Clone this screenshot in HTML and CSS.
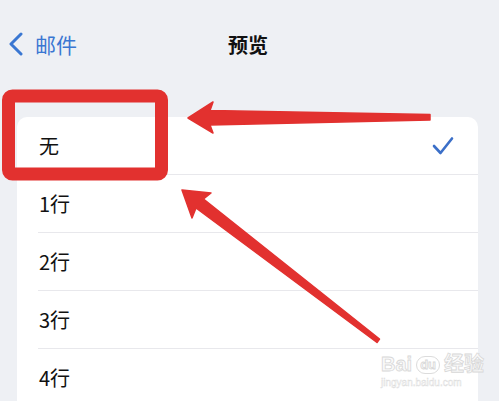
FILE: index.html
```html
<!DOCTYPE html>
<html lang="zh-CN">

<head>
    <meta charset="UTF-8">
    <meta name="viewport" content="width=device-width, initial-scale=1.0">
    <title>预览</title>
    <link rel="stylesheet" href="styles.css">
</head>

<body>
    <header class="navbar">
        <a class="back" href="#">
            <svg class="chevron" width="16" height="24" viewBox="0 0 16 24">
                <path d="M13 2 L3 12 L13 22" fill="none" stroke="currentColor" stroke-width="3" stroke-linecap="round" stroke-linejoin="round"/>
            </svg>
            <span>邮件</span>
        </a>
        <h1 class="title">预览</h1>
        <div></div>
    </header>

    <!-- 预览行数 -->
    <ul class="list">
        <li class="row">
            <div class="row-inner">
                <span>无</span>
                <svg class="check" width="22" height="20" viewBox="0 0 22 20">
                    <path d="M2 10 L8.5 17 L20 2.5" fill="none" stroke="currentColor" stroke-width="2.6" stroke-linecap="round" stroke-linejoin="round"/>
                </svg>
            </div>
        </li>
        <li class="row"><div class="row-inner"><span>1行</span></div></li>
        <li class="row"><div class="row-inner"><span>2行</span></div></li>
        <li class="row"><div class="row-inner"><span>3行</span></div></li>
        <li class="row"><div class="row-inner"><span>4行</span></div></li>
    </ul>

    <!-- 水印 -->
    <div class="watermark">
        <div class="wm-logo">Bai<span class="wm-du">du</span>经验</div>
        <div class="wm-url">jingyan.baidu.com</div>
    </div>

    <!-- 标注 -->
    <svg class="marks" width="499" height="401" viewBox="0 0 499 401">
        <rect x="8.5" y="96" width="153" height="78" rx="4" fill="none" stroke="#e2312f" stroke-width="13"/>
        <polygon points="188,118 213,102 210,110.5 430,114.5 430,120 210,125 213,133" fill="#e2312f" stroke="#e2312f" stroke-width="1.5" stroke-linejoin="round"/>
        <polygon points="182,190 211,193 203.5,199 379.5,339 377,342.5 196,208 192,218" fill="#e2312f" stroke="#e2312f" stroke-width="1.5" stroke-linejoin="round"/>
    </svg>
</body>

</html>
```

FILE: styles.css
```css
body {
    margin: 0;
    background-color: #eef0f4;
    font-family: "Noto Sans CJK SC", "Noto Sans", sans-serif;
    color: #111;
    height: 401px;
    overflow: hidden;
}

.navbar {
    display: grid;
    grid-template-columns: 1fr auto 1fr;
    align-items: center;
    height: 88px;
}

.back {
    display: flex;
    align-items: center;
    gap: 11px;
    padding-left: 8px;
    color: #3a77d2;
    text-decoration: none;
    font-size: 21px;
}

.chevron {
    display: block;
}

.title {
    margin: 0 3px 0 0;
    font-size: 20px;
    font-weight: 700;
    color: #111;
}

.list {
    list-style: none;
    margin: 29px 0 0 17px;
    padding: 0;
    width: 461px;
    background-color: #fff;
    border-radius: 10px 10px 0 0;
}

.row {
    height: 58px;
}

.row-inner {
    display: flex;
    align-items: center;
    justify-content: space-between;
    height: 57px;
    margin-left: 21px;
    padding: 0 24px 0 1px;
    border-bottom: 1px solid #e8e8ec;
    font-size: 20px;
}

.check {
    display: block;
    color: #3b6fc8;
}

.watermark {
    position: absolute;
    left: 381px;
    top: 352px;
    color: #fafafa;
    -webkit-text-stroke: 0.8px #d8d8d8;
    font-family: "Liberation Sans", "Noto Sans CJK SC", sans-serif;
}

.wm-logo {
    font-size: 20px;
    font-weight: 700;
    line-height: 24px;
}

.wm-du {
    display: inline-block;
    margin: 0 4px;
    padding: 0 3px;
    border: 1.5px solid #dcdcdc;
    border-radius: 9px;
    font-size: 13px;
    line-height: 16px;
    vertical-align: 2px;
}

.wm-url {
    font-size: 10px;
    line-height: 13px;
    -webkit-text-stroke: 0.4px #dadada;
}

.marks {
    position: absolute;
    top: 0;
    left: 0;
    pointer-events: none;
}
```
